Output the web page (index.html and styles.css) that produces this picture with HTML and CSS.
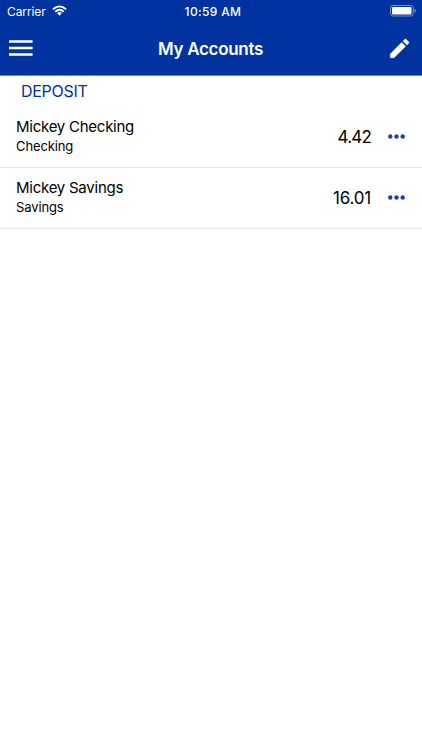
FILE: index.html
```html
<!DOCTYPE html>
<html lang="en">
<head>
<meta charset="utf-8">
<title>My Accounts</title>
<link rel="stylesheet" href="styles.css">
</head>
<body>
<header class="top">
  <div class="status">
    <div class="carrier"><span class="carrier-name">Carrier</span>
      <svg class="wifi" width="15" height="11" viewBox="0 0 16 11"><path fill="none" stroke="#fff" stroke-width="2" d="M1 4.200Q8-2 15 4.200M3.500 6.800Q8 2.800 12.500 6.800"/><path fill="#fff" d="M5.400 8.200Q8 6.200 10.600 8.200L8 11Z"/></svg>
    </div>
    <span class="time">10:59 AM</span>
    <svg class="battery" width="26" height="12" viewBox="0 0 26 12"><rect x=".5" y=".5" width="22.800" height="10.500" rx="2.500" fill="none" stroke="#fff" stroke-opacity=".45"/><rect x="2" y="2" width="19.500" height="7.500" rx="1.200" fill="#fff"/><path d="M24.500 3.800v4q1.400-.6 1.400-2t-1.400-2" fill="#fff" opacity=".5"/></svg>
  </div>
  <nav class="bar">
    <svg class="menu" width="24" height="18" viewBox="0 0 24 18"><path d="M0 2.500h23.600M0 9h23.600M0 15.500h23.600" stroke="#fff" stroke-width="2.600"/></svg>
    <h1 class="title">My Accounts</h1>
    <svg class="edit" width="25" height="25" viewBox="0 0 24 24"><path fill="#fff" stroke="#fff" stroke-width=".5" stroke-linejoin="round" d="M3.200 17.250V20.800h3.550L17.810 9.940l-3.750-3.750L3.200 17.250zM20.710 7.040a1 1 0 0 0 0-1.410l-2.340-2.340a1 1 0 0 0-1.410 0l-1.600 1.600 3.750 3.750 1.600-1.600z"/></svg>
  </nav>
</header>
<main>
  <h2 class="section">DEPOSIT</h2>
  <div class="row">
    <div class="info"><div class="name">Mickey Checking</div><div class="type">Checking</div></div>
    <div class="amount decimal-short">4.42</div>
    <svg class="more" width="17" height="5" viewBox="0 0 17 5"><g fill="#1c43a4"><circle cx="2.300" cy="2.500" r="2.200"/><circle cx="8.500" cy="2.500" r="2.200"/><circle cx="14.700" cy="2.500" r="2.200"/></g></svg>
  </div>
  <div class="row">
    <div class="info"><div class="name">Mickey Savings</div><div class="type">Savings</div></div>
    <div class="amount">16.01</div>
    <svg class="more" width="17" height="5" viewBox="0 0 17 5"><g fill="#1c43a4"><circle cx="2.300" cy="2.500" r="2.200"/><circle cx="8.500" cy="2.500" r="2.200"/><circle cx="14.700" cy="2.500" r="2.200"/></g></svg>
  </div>
</main>
</body>
</html>
```
FILE: styles.css
```css
* { box-sizing: border-box; }
body { margin: 0; width: 422px; min-height: 750px; background: #fff; color: #000; font-family: Inter, Roboto, sans-serif; }
.top { height: 76px; background: #0033a0; color: #fff; border-bottom: 1px solid #6b87c6; }
.status { height: 22px; display: grid; grid-template-columns: 1fr auto 1fr; align-items: center; padding: 0 6px 0 7px; }
.carrier { display: flex; align-items: center; gap: 6px; font-size: 12px; letter-spacing: -.1px; }
.wifi { margin-top: -1px; }
.time { font-size: 12px; font-weight: 500; letter-spacing: .35px; padding-left: 3px; }
.battery { justify-self: end; margin-top: -1px; }
.bar { height: 53px; display: grid; grid-template-columns: 1fr auto 1fr; align-items: center; padding: 0 10px 1px 9px; }
.title { margin: 0; font-size: 17px; line-height: 22px; font-weight: 600; letter-spacing: -.3px; padding: 1px 0 0; }
.edit { justify-self: end; }
.section { margin: 0; height: 31px; padding-left: 21px; font-size: 16px; line-height: 31px; font-weight: 400; letter-spacing: -.3px; color: #0033a0; }
.row { height: 61px; display: flex; align-items: center; padding: 0 17px 0 16px; border-bottom: 1px solid #e5e5e5; }
.info { flex: 1; padding-bottom: 2px; }
.name { font-size: 15px; line-height: 20px; letter-spacing: -.25px; }
.type { font-size: 13px; line-height: 19px; letter-spacing: -.12px; }
.amount { font-size: 17px; line-height: 22px; margin-right: 17px; letter-spacing: -.2px; }
.decimal-short { letter-spacing: -.8px; }
.more { margin-bottom: 1px; }
```
